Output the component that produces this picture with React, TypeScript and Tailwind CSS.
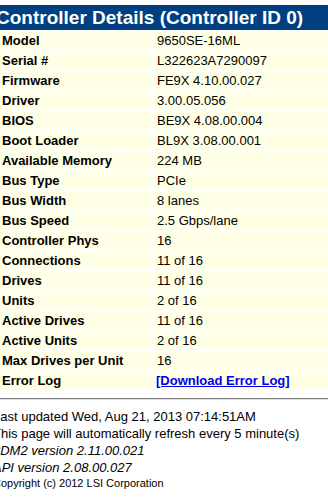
import React from "react";

const rows: [string, string][] = [
  ["Model", "9650SE-16ML"],
  ["Serial #", "L322623A7290097"],
  ["Firmware", "FE9X 4.10.00.027"],
  ["Driver", "3.00.05.056"],
  ["BIOS", "BE9X 4.08.00.004"],
  ["Boot Loader", "BL9X 3.08.00.001"],
  ["Available Memory", "224 MB"],
  ["Bus Type", "PCIe"],
  ["Bus Width", "8 lanes"],
  ["Bus Speed", "2.5 Gbps/lane"],
  ["Controller Phys", "16"],
  ["Connections", "11 of 16"],
  ["Drives", "11 of 16"],
  ["Units", "2 of 16"],
  ["Active Drives", "11 of 16"],
  ["Active Units", "2 of 16"],
  ["Max Drives per Unit", "16"],
];

export default function App() {
  return (
    <div
      className="w-[328px] h-[501px] overflow-hidden bg-white text-black"
      style={{ fontFamily: '"Liberation Sans", Arial, sans-serif' }}
    >
      <div className="pt-[5px]">
        <div className="h-[25px] bg-[#004080] text-white font-bold text-[19px] leading-[25px] whitespace-nowrap ml-[-4px]">
          Controller Details (Controller ID 0)
        </div>
        <div className="grid grid-cols-[152px_1fr] gap-[2px] mt-[2px] text-[13px] leading-[18px]">
          {rows.map(([k, v]) => (
            <React.Fragment key={k}>
              <div className="bg-[#ffffe6] font-bold pl-[2px] whitespace-nowrap">{k}</div>
              <div className="bg-[#ffffe6] pl-[3px] whitespace-nowrap">{v}</div>
            </React.Fragment>
          ))}
          <div className="bg-[#ffffe6] font-bold pl-[2px]">Error Log</div>
          <div className="bg-[#ffffe6] pl-[2px] whitespace-nowrap">
            <a href="#" className="text-[#0000ee] underline font-bold">
              [Download Error Log]
            </a>
          </div>
        </div>
        <div className="mt-[8px] border-t border-[#808080] border-b border-b-[#e0e0e0]" />
        <div className="ml-[-7px] mt-[8px] text-[13px] leading-[17px] whitespace-nowrap">
          <div>Last updated Wed, Aug 21, 2013 07:14:51AM</div>
          <div>This page will automatically refresh every 5 minute(s)</div>
          <div className="italic">3DM2 version 2.11.00.021</div>
          <div className="italic">API version 2.08.00.027</div>
          <div className="text-[11px] leading-[15px]">Copyright (c) 2012 LSI Corporation</div>
        </div>
      </div>
    </div>
  );
}
